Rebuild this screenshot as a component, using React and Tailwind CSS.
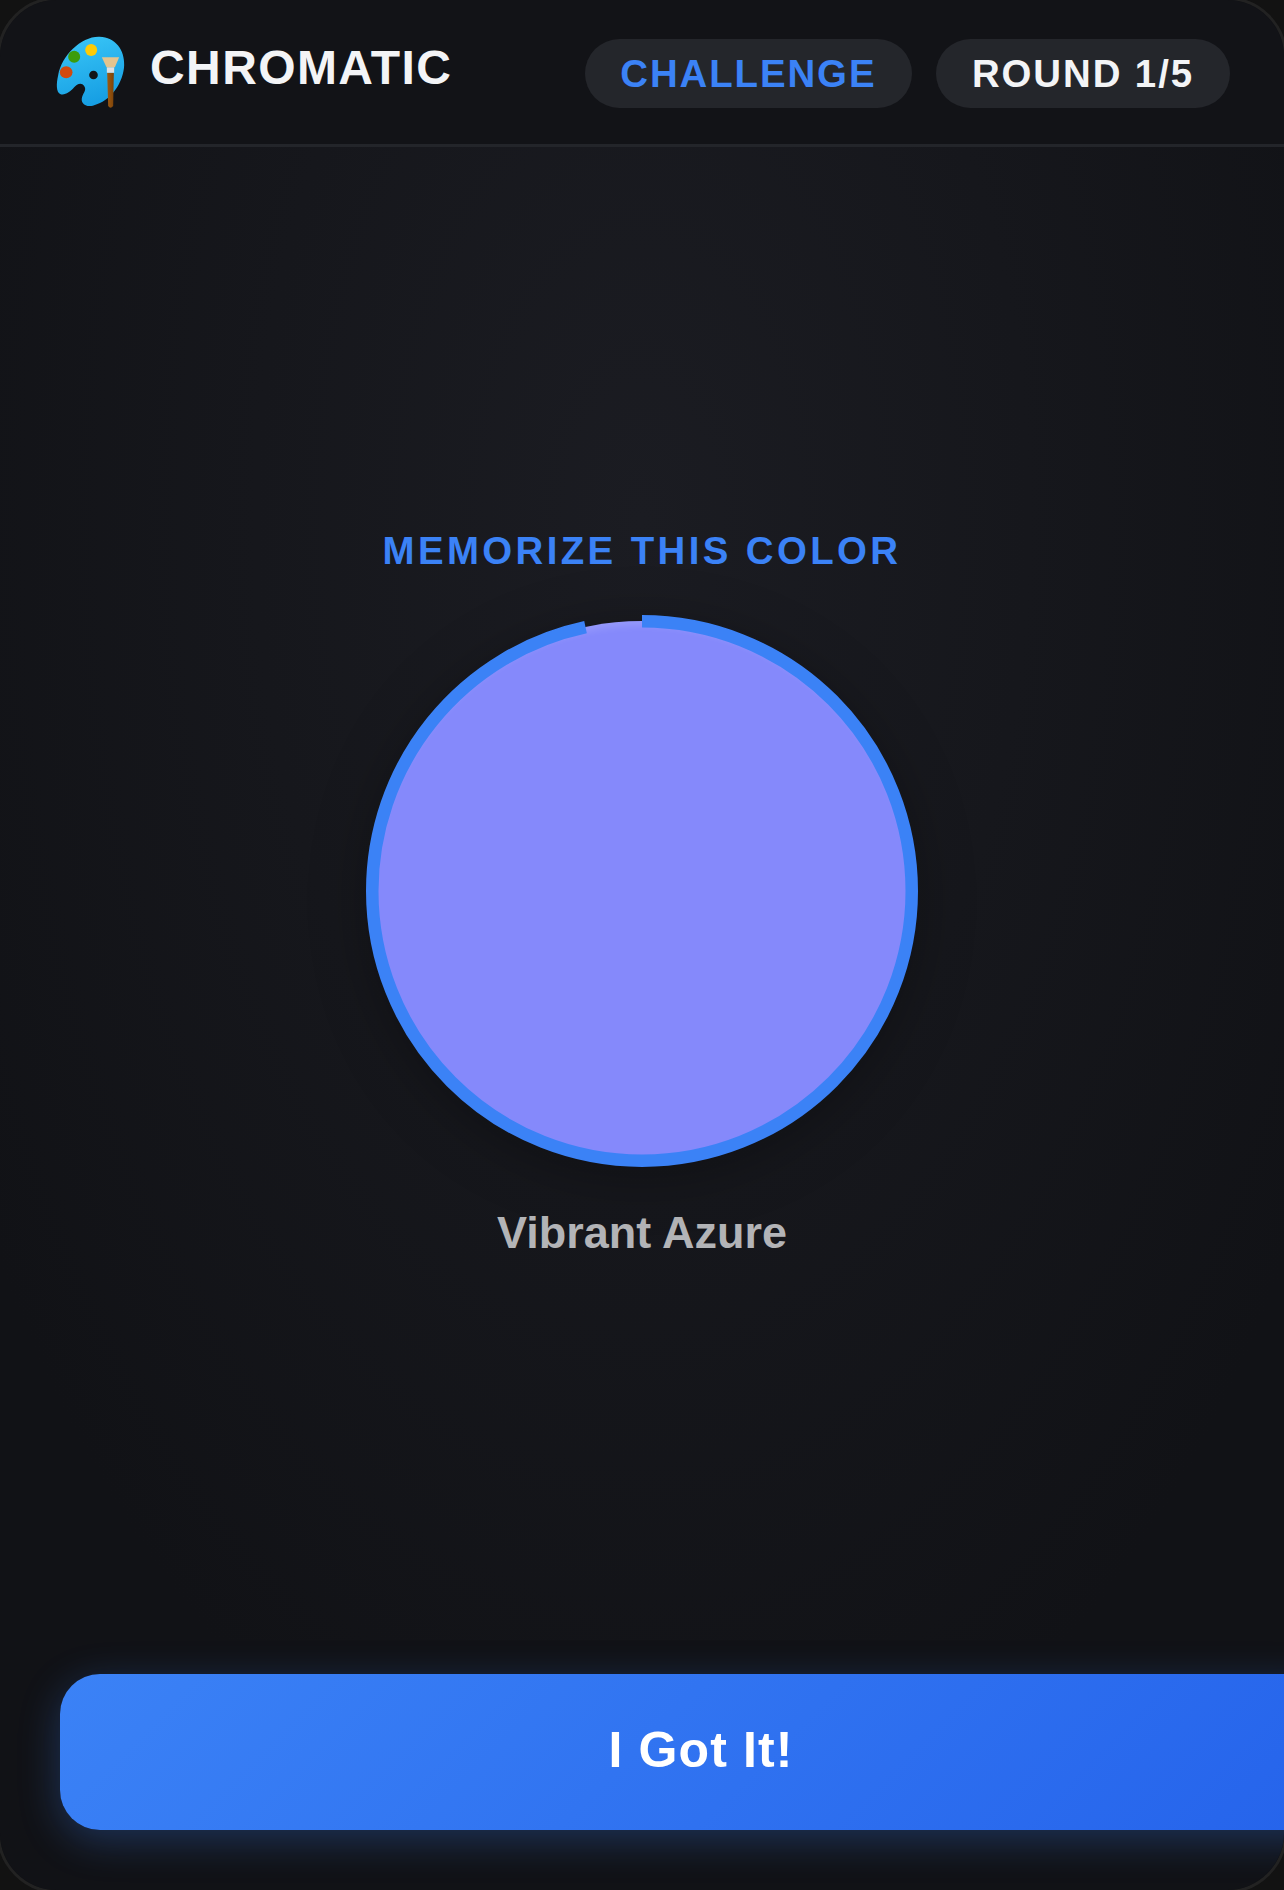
function PaletteIcon() {
  return (
    <svg width="72" height="75" viewBox="45 40 215 225" className="-mt-[2px] shrink-0">
      <defs>
        <linearGradient id="paletteBody" x1="0.35" y1="0" x2="0.65" y2="1">
          <stop offset="0" stopColor="#38c4f6" />
          <stop offset="1" stopColor="#149ce2" />
        </linearGradient>
        <linearGradient id="brushHandle" x1="0" y1="0" x2="1" y2="0">
          <stop offset="0" stopColor="#a05a10" />
          <stop offset="1" stopColor="#7c430a" />
        </linearGradient>
      </defs>
      <path
        d="M178 48 C226 50 254 88 252 134 C250 184 214 242 158 255 C134 260 120 246 126 228 C130 215 140 208 132 196 C124 184 110 190 102 200 C90 214 72 226 60 220 C48 214 48 190 54 164 C64 104 124 46 178 48 Z"
        fill="url(#paletteBody)"
      />
      <circle cx="160" cy="163" r="13" fill="#121317" />
      <ellipse cx="78" cy="155" rx="19" ry="18" fill="#d24a0e" />
      <circle cx="102" cy="108" r="18" fill="#3c9c0c" />
      <circle cx="153" cy="88" r="18" fill="#ffcb05" />
      <path d="M201 156 H221 L219 256 Q211 266 204 256 Z" fill="url(#brushHandle)" />
      <path d="M200 140 H222 V156 H200 Z" fill="#dfe0e2" />
      <path d="M185 110 H237 L224 140 H199 Z" fill="#e3c48f" />
    </svg>
  );
}

export default function App() {
  const r = 269.75;
  const circ = 2 * Math.PI * r;
  const progress = 0.966;

  return (
    <div className="h-[1890px] w-[1284px] overflow-hidden bg-[#121212] font-['Liberation_Sans',Arial,sans-serif]">
      {/* frame is a bit bigger than the window, only its corners show */}
      <div className="-m-[3px] flex h-[1896px] w-[1290px] flex-col overflow-hidden rounded-[60px] border-[3px] border-[#222222] bg-[#121317]">
        <header className="flex h-[147px] shrink-0 items-center justify-between border-b-[3px] border-[#23252a] bg-[#121317] pr-[54px] pl-[55px]">
          <div className="flex items-center gap-[23px]">
            <PaletteIcon />
            <h1 className="-mt-[9px] text-[48px] leading-[60px] font-bold tracking-[1.4px] text-[#f3f4f6]">CHROMATIC</h1>
          </div>
          <div className="mt-[3px] flex items-center gap-[24px]">
            <span className="flex h-[69px] items-center rounded-full bg-[#24262b] px-[35.5px] text-[38.4px] font-bold tracking-[1.92px] text-[#3b82f6]">CHALLENGE</span>
            <span className="flex h-[69px] items-center rounded-full bg-[#24262b] px-[36px] text-[38.4px] font-bold tracking-[1.92px] text-[#f3f4f6]">ROUND 1/5</span>
          </div>
        </header>

        <main className="flex flex-1 flex-col items-center justify-center bg-[radial-gradient(ellipse_at_50%_25%,#1b1c22_0%,#111216_85%)]">
          <p className="pt-[1px] text-[38.4px] leading-[60px] font-bold tracking-[3.4px] text-[#3b82f6]">MEMORIZE THIS COLOR</p>
          <div className="relative mt-[34px] h-[552px] w-[552px]">
            <div className="absolute inset-[6px] rounded-full bg-[#8589fb] shadow-[inset_0_4px_8px_rgba(255,255,255,0.16),0_10px_60px_rgba(0,0,0,0.35)]" />
            <svg className="absolute inset-0 -rotate-90" width="552" height="552" viewBox="0 0 552 552">
              <circle
                cx="276"
                cy="276"
                r={r}
                fill="none"
                stroke="#3b82f6"
                strokeWidth="12.5"
                strokeDasharray={circ}
                strokeDashoffset={circ * (1 - progress)}
              />
            </svg>
          </div>
          <p className="mt-[31px] text-[45px] leading-[69px] font-bold text-[#b3b4b7]">Vibrant Azure</p>
        </main>

        <footer className="shrink-0 bg-[#111216] pt-[34px] pb-[60px]">
          <button className="ml-[60px] flex h-[156px] w-[1282px] items-center justify-center rounded-[40px] bg-[linear-gradient(135deg,#3b82f6,#2563eb)] pb-[4px] text-[50px] font-bold tracking-[1.1px] text-white shadow-[0_10px_40px_rgba(59,130,246,0.3)]">
            I Got It!
          </button>
        </footer>
      </div>
    </div>
  );
}
